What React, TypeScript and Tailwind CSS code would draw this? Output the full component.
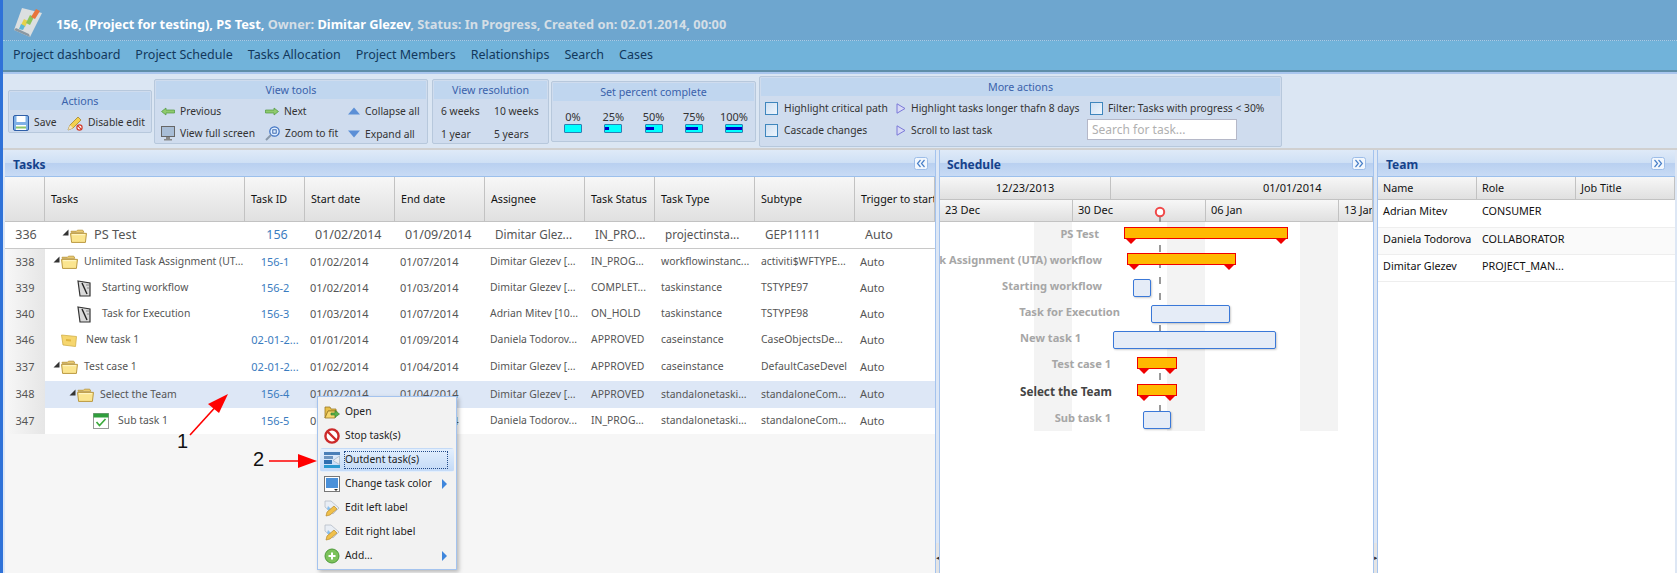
import type { ReactNode } from "react";

function Folder() {
  return (
    <svg width="17" height="15" viewBox="0 0 16 14" className="shrink-0">
      <path d="M1 3h5l1 -1h5l1 2H1z" fill="#f5d67a" stroke="#b8943a" strokeWidth="0.8" />
      <path d="M0.5 5h15l-1 8.5H1.5z" fill="#fbe58f" stroke="#b8943a" strokeWidth="0.9" />
      <path d="M2 6.2h12" stroke="#fff6c8" strokeWidth="1" />
    </svg>
  );
}

function NoteIcon() {
  return (
    <svg width="15" height="17" viewBox="0 0 15 17" className="shrink-0">
      <path d="M1 1l12 2v13H3z" fill="#d9d9d9" stroke="#333" strokeWidth="1.2" />
      <path d="M5 3l5 11" stroke="#222" strokeWidth="1.4" />
      <path d="M9 5h3M10 8h2" stroke="#888" strokeWidth="1" />
    </svg>
  );
}

function CaseIcon() {
  return (
    <svg width="16" height="14" viewBox="0 0 16 14" className="shrink-0">
      <path d="M0.5 2l15 1.5 -1 10 -12.5 -1.5z" fill="#f6d66e" stroke="#d2b04a" strokeWidth="0.8" />
      <path d="M5 6l5 .5v2l-5 -.5z" fill="#e0b640" />
    </svg>
  );
}

function CalendarCheck() {
  return (
    <svg width="16" height="16" viewBox="0 0 16 16" className="shrink-0">
      <rect x="0.5" y="0.5" width="15" height="15" fill="#fff" stroke="#999" />
      <rect x="0.5" y="0.5" width="15" height="4" fill="#2f9e3c" />
      <path d="M3.5 9l3 3.5L12.5 6" fill="none" stroke="#3caa3c" strokeWidth="1.7" />
    </svg>
  );
}

function Triangle({ cls }: { cls: string }) {
  return (
    <svg width="7" height="7" viewBox="0 0 7 7" className={cls}>
      <path d="M6.5 0.5v6H0.5z" fill="#333" />
    </svg>
  );
}

function Logo() {
  return (
    <svg width="30" height="30" viewBox="0 0 30 30" className="shrink-0 mt-[4px]">
      <path d="M9 1l20 5 -12 24L1 23z" fill="#dcdfe0" />
      <path d="M1 23l16 7 -1 -3L3 21z" fill="#8b98a2" />
      <path d="M8 18l4 2 3 -6 -4 -2z" fill="#e6d24a" />
      <path d="M6 22l4 1 2 -4 -4 -2z" fill="#5cb7d8" />
      <path d="M13 16l4 2 4 -8 -4 -2z" fill="#8cc45a" />
      <path d="M18 10l4 2 5 -8 -4 -2z" fill="#e8743a" />
    </svg>
  );
}

function SaveIcon() {
  return (
    <svg width="16" height="16" viewBox="0 0 16 16" className="shrink-0">
      <rect x="0.5" y="0.5" width="15" height="15" rx="1.5" fill="#7fb0e6" stroke="#2f5fa8" />
      <rect x="3.5" y="1" width="9" height="6" fill="#fff" />
      <rect x="3" y="10" width="10" height="5" fill="#fff" />
      <rect x="3" y="11.5" width="10" height="2" fill="#8cc46a" />
    </svg>
  );
}

function PencilNo() {
  return (
    <svg width="16" height="16" viewBox="0 0 16 16" className="shrink-0">
      <path d="M1 15l2 -5 8 -8 3 3 -8 8z" fill="#f3d04e" stroke="#a6842a" strokeWidth="0.8" />
      <path d="M1 15l2 -5 3 3z" fill="#f5e3c0" />
      <circle cx="12.5" cy="12.5" r="2.6" fill="#fff" stroke="#d23a2a" strokeWidth="1.2" />
      <path d="M10.8 10.8l3.4 3.4" stroke="#d23a2a" strokeWidth="1.2" />
    </svg>
  );
}

function ArrowLeft() {
  return (
    <svg width="14" height="9" viewBox="0 0 14 9" className="shrink-0">
      <path d="M0.5 4.5L5 1v2h8.5v3H5v2z" fill="#8fca6e" stroke="#4d9a3c" strokeWidth="0.7" />
    </svg>
  );
}

function ArrowRight() {
  return (
    <svg width="14" height="9" viewBox="0 0 14 9" className="shrink-0">
      <path d="M13.5 4.5L9 1v2H0.5v3H9v2z" fill="#8fca6e" stroke="#4d9a3c" strokeWidth="0.7" />
    </svg>
  );
}

function Monitor() {
  return (
    <svg width="14" height="15" viewBox="0 0 14 15" className="shrink-0">
      <rect x="0.5" y="0.5" width="13" height="10" fill="#a8bdd6" stroke="#666" />
      <path d="M5 11h4v2H5zM3 13h8v1.5H3z" fill="#888" />
    </svg>
  );
}

function ZoomFit() {
  return (
    <svg width="15" height="15" viewBox="0 0 15 15" className="shrink-0">
      <circle cx="9.5" cy="5.5" r="4.7" fill="#dfeeff" stroke="#3b6fc0" strokeWidth="1.2" />
      <path d="M6 9L1 14" stroke="#8a99aa" strokeWidth="2" />
      <rect x="7.8" y="3.8" width="3.4" height="3.4" fill="none" stroke="#2f5fa8" strokeWidth="0.9" />
    </svg>
  );
}

function CaretUp() {
  return (
    <svg width="12" height="8" viewBox="0 0 12 8" className="shrink-0">
      <path d="M6 0.5L12 7.5H0z" fill="#5b8fd6" />
    </svg>
  );
}

function CaretDown() {
  return (
    <svg width="12" height="8" viewBox="0 0 12 8" className="shrink-0">
      <path d="M6 7.5L12 0.5H0z" fill="#5b8fd6" />
    </svg>
  );
}

function PlayIcon() {
  return (
    <svg width="10" height="11" viewBox="0 0 10 11" className="shrink-0">
      <path d="M1 0.8l8 4.7 -8 4.7z" fill="#d7d9f5" stroke="#7a78d8" />
    </svg>
  );
}

function CheckBox() {
  return <span className="w-[13px] h-[13px] shrink-0 border border-[#3f86bd] bg-gradient-to-br from-[#cfe0f3] to-[#eef5fc]" />;
}

function Collapser({ dir }: { dir: "left" | "right" }) {
  return (
    <svg width="14" height="13" viewBox="0 0 14 13" className="shrink-0">
      <rect x="0.5" y="0.5" width="13" height="12" rx="2" fill="#f2f7fd" stroke="#9dbde8" />
      <path d={dir === "left" ? "M6.5 3L3.5 6.5l3 3.5M10.5 3L7.5 6.5l3 3.5" : "M3.5 3l3 3.5-3 3.5M7.5 3l3 3.5-3 3.5"} fill="none" stroke="#4a80c8" strokeWidth="1.2" />
    </svg>
  );
}

function Group({ title, className, children }: { title: string; className: string; children: ReactNode }) {
  return (
    <div className={`border border-[#b7c8dc] rounded-[2px] bg-[#cfdcee] p-px ${className}`}>
      <div className="h-[18px] bg-[#c0d6ef] text-[#3a62ab] text-[10.7px] text-center leading-[18px]">{title}</div>
      {children}
    </div>
  );
}

function Tool({ icon, label, className }: { icon: ReactNode; label: string; className: string }) {
  return (
    <div className={`absolute flex items-center gap-[5px] whitespace-nowrap ${className}`}>
      {icon}
      <span>{label}</span>
    </div>
  );
}

function PanelHeader({ title, pad, dir }: { title: string; pad: string; dir: "left" | "right" }) {
  return (
    <div className={`h-[27px] shrink-0 flex items-center justify-between border-b border-[#9cc0ec] bg-[linear-gradient(#dfeaf8_0%,#cfe0f5_48%,#b9d0f0_52%,#c8dbf5_100%)] ${pad}`}>
      <span className="pt-[3px] font-bold text-[#15428b] text-[12px]">{title}</span>
      <Collapser dir={dir} />
    </div>
  );
}

const headBg = "bg-gradient-to-b from-[#f7f7f7] to-[#e0e0e0] border-r border-b border-[#c2c2c2] text-[#111]";

const columns = [
  { label: "", cls: "w-[40px]" },
  { label: "Tasks", cls: "w-[200px]" },
  { label: "Task ID", cls: "w-[60px]" },
  { label: "Start date", cls: "w-[90px]" },
  { label: "End date", cls: "w-[90px]" },
  { label: "Assignee", cls: "w-[100px]" },
  { label: "Task Status", cls: "w-[70px]" },
  { label: "Task Type", cls: "w-[100px]" },
  { label: "Subtype", cls: "w-[100px]" },
  { label: "Trigger to start", cls: "w-[80px]" },
];

const rows = [
  {
    num: "338", h: "h-[26px]", bg: "bg-white", tree: "pl-[8px]", gap: "gap-[6px]", tri: true, icon: <Folder />, name: "Unlimited Task Assignment (UT...",
    id: "156-1", start: "01/02/2014", end: "01/07/2014", who: "Dimitar Glezev [...", status: "IN_PROG...", type: "workflowinstanc...", sub: "activiti$WFTYPE...",
  },
  {
    num: "339", h: "h-[26px]", bg: "bg-white", tree: "pl-[32px]", gap: "gap-[10px]", tri: false, icon: <NoteIcon />, name: "Starting workflow",
    id: "156-2", start: "01/02/2014", end: "01/03/2014", who: "Dimitar Glezev [...", status: "COMPLET...", type: "taskinstance", sub: "TSTYPE97",
  },
  {
    num: "340", h: "h-[26px]", bg: "bg-white", tree: "pl-[32px]", gap: "gap-[10px]", tri: false, icon: <NoteIcon />, name: "Task for Execution",
    id: "156-3", start: "01/03/2014", end: "01/07/2014", who: "Adrian Mitev [10...", status: "ON_HOLD", type: "taskinstance", sub: "TSTYPE98",
  },
  {
    num: "346", h: "h-[26px]", bg: "bg-white", tree: "pl-[16px]", gap: "gap-[9px]", tri: false, icon: <CaseIcon />, name: "New task 1",
    id: "02-01-2...", start: "01/01/2014", end: "01/09/2014", who: "Daniela Todorov...", status: "APPROVED", type: "caseinstance", sub: "CaseObjectsDe...",
  },
  {
    num: "337", h: "h-[28px]", bg: "bg-white", tree: "pl-[8px]", gap: "gap-[6px]", tri: true, icon: <Folder />, name: "Test case 1",
    id: "02-01-2...", start: "01/02/2014", end: "01/04/2014", who: "Dimitar Glezev [...", status: "APPROVED", type: "caseinstance", sub: "DefaultCaseDevel",
  },
  {
    num: "348", h: "h-[27px]", bg: "bg-[#dde7f6]", tree: "pl-[24px]", gap: "gap-[6px]", tri: true, icon: <Folder />, name: "Select the Team",
    id: "156-4", start: "01/02/2014", end: "01/04/2014", who: "Dimitar Glezev [...", status: "APPROVED", type: "standalonetaski...", sub: "standaloneCom...",
  },
  {
    num: "347", h: "h-[26px]", bg: "bg-white", tree: "pl-[48px]", gap: "gap-[9px]", tri: false, icon: <CalendarCheck />, name: "Sub task 1",
    id: "156-5", start: "01/02/2014", end: "01/04/2014", who: "Daniela Todorov...", status: "IN_PROG...", type: "standalonetaski...", sub: "standaloneCom...",
  },
];

function TaskRow({ r }: { r: (typeof rows)[number] }) {
  return (
    <div className={`flex items-center text-[#555] text-[10.4px] ${r.h}`}>
      <div className="w-[40px] h-full flex items-center justify-center text-[11px] bg-gradient-to-r from-[#f7f7f7] to-[#e6e6e6]">{r.num}</div>
      <div className={`w-[200px] h-full flex items-center ${r.bg} ${r.tree}`}>
        {r.tri && <Triangle cls="shrink-0 mb-[5px] mr-px" />}
        <div className={`flex items-center ${r.gap}`}>
          {r.icon}
          <span className="whitespace-nowrap">{r.name}</span>
        </div>
      </div>
      <div className={`flex flex-1 h-full items-center ${r.bg}`}>
        <div className="w-[60px] text-center text-[11px] text-[#3a7cc0] whitespace-nowrap">{r.id}</div>
        <div className="w-[90px] pl-[5px] text-[11px]">{r.start}</div>
        <div className="w-[90px] pl-[5px] text-[11px]">{r.end}</div>
        <div className="w-[100px] pl-[5px] whitespace-nowrap">{r.who}</div>
        <div className="w-[70px] pl-[6px] whitespace-nowrap">{r.status}</div>
        <div className="w-[100px] pl-[6px] whitespace-nowrap">{r.type}</div>
        <div className="w-[100px] pl-[6px] whitespace-nowrap">{r.sub}</div>
        <div className="w-[80px] pl-[5px] text-[11px]">Auto</div>
      </div>
    </div>
  );
}

function TasksPanel() {
  return (
    <div className="w-[930px] shrink-0 flex flex-col overflow-hidden bg-[#f6f6f6]">
      <PanelHeader title="Tasks" pad="pl-[8px] pr-[7px]" dir="left" />
      <div className="flex h-[45px] shrink-0 text-[10.7px]">
        {columns.map((c) => (
          <div key={c.label} className={`shrink-0 flex items-center pl-[6px] whitespace-nowrap overflow-hidden ${c.cls} ${headBg}`}>{c.label}</div>
        ))}
      </div>
      <div className="flex h-[27px] shrink-0 items-center text-[11.7px] text-[#555] bg-white border-b border-[#c8c8c8]">
        <div className="w-[40px] pl-[2px] text-center text-[12.5px]">336</div>
        <div className="w-[200px] flex items-center pl-[17px]">
          <Triangle cls="shrink-0 mb-[5px] mr-px" />
          <div className="flex items-center gap-[7px]">
            <Folder />
            <span className="text-[12.8px]">PS Test</span>
          </div>
        </div>
        <div className="w-[60px] pl-[4px] text-center text-[12.5px] text-[#3a7cc0]">156</div>
        <div className="w-[90px] pl-[10px] text-[12.5px]">01/02/2014</div>
        <div className="w-[90px] pl-[10px] text-[12.5px]">01/09/2014</div>
        <div className="w-[100px] pl-[10px] whitespace-nowrap">Dimitar Glez...</div>
        <div className="w-[70px] pl-[10px] whitespace-nowrap">IN_PRO...</div>
        <div className="w-[100px] pl-[10px] whitespace-nowrap">projectinsta...</div>
        <div className="w-[100px] pl-[10px]">GEP11111</div>
        <div className="w-[80px] pl-[10px] text-[12.5px]">Auto</div>
      </div>
      {rows.map((r) => (
        <TaskRow key={r.num} r={r} />
      ))}
    </div>
  );
}

const ganttLabels = [
  { text: "PS Test", cls: "left-[159px] top-[3px] text-[11.1px] text-[#a6a6a6]" },
  { text: "Unlimited Task Assignment (UTA) workflow", cls: "left-[162px] top-[29px] text-[11.1px] text-[#a6a6a6]" },
  { text: "Starting workflow", cls: "left-[162px] top-[55px] text-[11.1px] text-[#a6a6a6]" },
  { text: "Task for Execution", cls: "left-[180px] top-[81px] text-[11.1px] text-[#a6a6a6]" },
  { text: "New task 1", cls: "left-[141px] top-[107px] text-[11.1px] text-[#a6a6a6]" },
  { text: "Test case 1", cls: "left-[171px] top-[133px] text-[11.1px] text-[#a6a6a6]" },
  { text: "Select the Team", cls: "left-[172px] top-[160px] text-[11.7px] text-[#444]" },
  { text: "Sub task 1", cls: "left-[171px] top-[187px] text-[11.1px] text-[#a6a6a6]" },
];

const summaryBars = [
  { cls: "left-[184px] top-[5px] w-[164px]" },
  { cls: "left-[187px] top-[31px] w-[109px]" },
  { cls: "left-[197px] top-[135px] w-[40px]" },
  { cls: "left-[197px] top-[162px] w-[40px]" },
];

const taskBars = [
  { cls: "left-[193px] top-[57px] w-[18px]" },
  { cls: "left-[211px] top-[83px] w-[79px]" },
  { cls: "left-[173px] top-[109px] w-[163px]" },
  { cls: "left-[203px] top-[189px] w-[28px]" },
];

function SchedulePanel() {
  return (
    <div className="w-[433px] shrink-0 flex flex-col overflow-hidden bg-white">
      <PanelHeader title="Schedule" pad="pl-[7px] pr-[7px]" dir="right" />
      <div className="flex h-[23px] shrink-0">
        <div className={`w-[171px] shrink-0 flex items-center justify-center text-[#111] ${headBg}`}>12/23/2013</div>
        <div className={`flex-1 flex items-center pl-[152px] text-[#111] ${headBg}`}>01/01/2014</div>
      </div>
      <div className="relative flex h-[22px] shrink-0">
        <div className={`w-[133px] shrink-0 flex items-center pl-[5px] text-[#111] ${headBg}`}>23 Dec</div>
        <div className={`w-[133px] shrink-0 flex items-center pl-[5px] text-[#111] ${headBg}`}>30 Dec</div>
        <div className={`w-[133px] shrink-0 flex items-center pl-[5px] text-[#111] ${headBg}`}>06 Jan</div>
        <div className={`flex-1 flex items-center pl-[5px] whitespace-nowrap overflow-hidden text-[#111] ${headBg}`}>13 Jan</div>
        <svg width="12" height="16" viewBox="0 0 12 16" className="absolute left-[214px] top-[6px]">
          <path d="M6 10v6" stroke="#999" strokeWidth="2" />
          <circle cx="6" cy="6" r="4.2" fill="#fff" stroke="#f04848" strokeWidth="2" />
        </svg>
      </div>
      <div className="relative flex-1 overflow-hidden">
        <div className="absolute left-[94px] top-0 w-[38px] h-[209px] bg-[#f3f3f3]" />
        <div className="absolute left-[227px] top-0 w-[38px] h-[209px] bg-[#f3f3f3]" />
        <div className="absolute left-[360px] top-0 w-[38px] h-[209px] bg-[#f3f3f3]" />
        <svg width="2" height="212" viewBox="0 0 2 212" className="absolute left-[219px] top-0">
          <path d="M1 7V212" stroke="#999" strokeWidth="2" strokeDasharray="7 9" strokeDashoffset="-16" />
        </svg>
        {ganttLabels.map((l) => (
          <div key={l.text} className={`absolute -translate-x-full h-[18px] leading-[18px] font-bold whitespace-nowrap ${l.cls}`}>{l.text}</div>
        ))}
        {summaryBars.map((b) => (
          <div key={b.cls} className={`absolute h-[12px] bg-[#ffb900] border border-[#f00000] ${b.cls}`}>
            <span className="absolute left-[1px] top-[11px] w-0 h-0 border-x-[5px] border-t-[5px] border-x-transparent border-t-[#f00000]" />
            <span className="absolute right-[1px] top-[11px] w-0 h-0 border-x-[5px] border-t-[5px] border-x-transparent border-t-[#f00000]" />
          </div>
        ))}
        {taskBars.map((b) => (
          <div key={b.cls} className={`absolute h-[18px] rounded-[2px] bg-[#e5ecf7] border border-[#3a78d8] shadow-[1px_1px_2px_rgba(0,0,0,0.2)] ${b.cls}`} />
        ))}
      </div>
    </div>
  );
}

const team = [
  { name: "Adrian Mitev", role: "CONSUMER", cls: "h-[28px] bg-white" },
  { name: "Daniela Todorova", role: "COLLABORATOR", cls: "h-[27px] bg-[#fafafa]" },
  { name: "Dimitar Glezev", role: "PROJECT_MAN...", cls: "h-[27px] bg-white" },
];

function TeamPanel() {
  return (
    <div className="w-[297px] shrink-0 flex flex-col overflow-hidden bg-white text-[10.8px]">
      <PanelHeader title="Team" pad="pl-[8px] pr-[10px]" dir="right" />
      <div className="flex h-[23px] shrink-0">
        <div className={`w-[99px] shrink-0 flex items-center pl-[5px] ${headBg}`}>Name</div>
        <div className={`w-[99px] shrink-0 flex items-center pl-[5px] ${headBg}`}>Role</div>
        <div className={`w-[99px] shrink-0 flex items-center pl-[5px] ${headBg}`}>Job Title</div>
      </div>
      {team.map((t) => (
        <div key={t.name} className={`flex items-center text-[#111] border-b border-[#eeeeee] ${t.cls}`}>
          <div className="w-[99px] pl-[5px] pb-[4px] whitespace-nowrap">{t.name}</div>
          <div className="w-[99px] pl-[5px] pb-[4px] whitespace-nowrap">{t.role}</div>
        </div>
      ))}
    </div>
  );
}

function Splitter({ handle }: { handle: string }) {
  return (
    <div className="relative w-[5px] shrink-0 bg-[#dde7f5] border-x border-[#a4c3ee]">
      <div className="absolute left-0 bottom-0 w-[3px] h-[30px] bg-[#e4e4e4] text-[#333] text-[7px] leading-[30px] text-center overflow-hidden">{handle}</div>
    </div>
  );
}

function LabelIcon() {
  return (
    <svg width="16" height="17" viewBox="0 0 16 17">
      <path d="M1 1h6l8 7 -6 6 -8 -7z" fill="#e9eef5" stroke="#b5bcc6" strokeWidth="0.8" />
      <path d="M4 6l4 4 -2 2 -3 -3z" fill="#8ac0ee" />
      <path d="M2 16l1 -4 7 -6 3 3 -7 6z" fill="#f0c04a" stroke="#b88a2c" strokeWidth="0.7" />
    </svg>
  );
}

const menuItems = [
  { label: "Open", cls: "", more: false, icon: (
    <svg width="16" height="15" viewBox="0 0 16 15">
      <path d="M1 13V2h5l1 2h5v2H4z" fill="#e8c04a" stroke="#9a7a24" strokeWidth="0.8" />
      <path d="M1 13l3 -7h9l-2 7z" fill="#f6d66e" stroke="#9a7a24" strokeWidth="0.8" />
      <path d="M7 8h4V5.5L15.5 9 11 12.5V10H7z" fill="#5bb04a" stroke="#2f7a2a" strokeWidth="0.6" />
    </svg>
  ) },
  { label: "Stop task(s)", cls: "", more: false, icon: (
    <svg width="16" height="16" viewBox="0 0 16 16"><circle cx="8" cy="8" r="6.6" fill="#fff" stroke="#cc2a2a" strokeWidth="2.4" /><path d="M3.5 3.5l9 9" stroke="#cc2a2a" strokeWidth="2.4" /></svg>
  ) },
  { label: "Outdent task(s)", cls: "bg-gradient-to-b from-[#e3effd] to-[#c3daf7] border-[#a4c3ee] rounded-[3px]", more: false, icon: (
    <svg width="16" height="16" viewBox="0 0 16 16"><rect width="16" height="3" fill="#4a7fb8" /><rect y="4" width="9" height="3" fill="#6c94c0" /><rect y="8" width="8" height="4" fill="#2f6fb0" /><rect y="13" width="16" height="3" fill="#2a9ad0" /><path d="M15.5 4L9 8.5l6.5 4z" fill="#e8edf3" stroke="#9ab" strokeWidth="0.6" /></svg>
  ) },
  { label: "Change task color", cls: "", more: true, icon: (
    <svg width="16" height="16" viewBox="0 0 16 16"><rect x="0.5" y="0.5" width="15" height="15" fill="#fff" stroke="#777" /><rect x="2" y="2" width="12" height="10" fill="#4a90d9" /><path d="M10 13h4l-2 2z" fill="#333" /></svg>
  ) },
  { label: "Edit left label", cls: "", more: false, icon: <LabelIcon /> },
  { label: "Edit right label", cls: "", more: false, icon: <LabelIcon /> },
  { label: "Add...", cls: "", more: true, icon: (
    <svg width="16" height="16" viewBox="0 0 16 16"><circle cx="8" cy="8" r="7" fill="#7cc25a" stroke="#4e9a3a" /><path d="M8 4.5v7M4.5 8h7" stroke="#fff" strokeWidth="2" /></svg>
  ) },
];

function ContextMenu() {
  return (
    <div className="absolute left-[317px] top-[396px] w-[140px] h-[174px] px-[2px] py-[3px] bg-[#f2f2f2] border border-[#a4c3ee] shadow-[2px_2px_4px_rgba(0,0,0,0.25)] text-[#222] text-[10.3px]">
      {menuItems.map((m) => (
        <div key={m.label} className={`h-[24px] flex items-center pl-[3px] pr-[6px] border border-transparent ${m.cls}`}>
          <span className="w-[16px] h-[16px] shrink-0 flex items-center justify-center">{m.icon}</span>
          <span className={`ml-[5px] flex-1 whitespace-nowrap ${m.label === "Outdent task(s)" ? "outline-dotted outline-1 outline-[#224a88]" : ""}`}>{m.label}</span>
          {m.more && <span className="w-0 h-0 border-y-[5px] border-l-[5px] border-y-transparent border-l-[#3f86dc]" />}
        </div>
      ))}
    </div>
  );
}

function Annotations() {
  return (
    <>
      <svg className="absolute left-0 top-0 pointer-events-none" width="1677" height="573" viewBox="0 0 1677 573">
        <path d="M190 435L220 402" stroke="#f00" strokeWidth="1.6" />
        <path d="M228 394L208 404L219 413z" fill="#f00" />
        <path d="M269 461H303" stroke="#f00" strokeWidth="1.6" />
        <path d="M317 461L298 454V468z" fill="#f00" />
      </svg>
      <div className="absolute left-[177px] top-[429px] text-[20px] leading-[24px] text-[#111] font-['Liberation_Sans',sans-serif]">1</div>
      <div className="absolute left-[253px] top-[447px] text-[20px] leading-[24px] text-[#111] font-['Liberation_Sans',sans-serif]">2</div>
    </>
  );
}

export default function App() {
  return (
    <div className="relative w-[1677px] h-[573px] overflow-hidden bg-[#2f72d8] pl-[3px] text-[11px] text-[#333] font-['Noto_Sans',sans-serif]">
      <div className="h-full flex flex-col bg-[#dde7f5]">
        <div className="h-[41px] shrink-0 flex items-center pl-[10px] gap-[13px] bg-[#6ea6cf] border-b border-dotted border-[#a8cde6]">
          <Logo />
          <div className="pt-[9px] text-[12.8px] font-bold text-white whitespace-nowrap">
            156, (Project for testing), PS Test, <span className="text-[#d4dee6]">Owner:</span> Dimitar Glezev<span className="text-[#d4dee6]">, Status: In Progress, Created on: 02.01.2014, 00:00</span>
          </div>
        </div>
        <div className="h-[31px] shrink-0 flex items-center gap-[15px] pl-[10px] bg-[#71b3da] border-b-2 border-[#5f8ea8] text-[12.5px] text-[#12385c]">
          {["Project dashboard", "Project Schedule", "Tasks Allocation", "Project Members", "Relationships", "Search", "Cases"].map((n) => (
            <span key={n} className="whitespace-nowrap">{n}</span>
          ))}
        </div>
        <div className="h-[78px] shrink-0 flex items-center pl-[5px] border-t-2 border-[#a9c6ee] border-b-2 border-b-[#d0d0d0] bg-[#dbe6f3] text-[10.3px]">
          <Group title="Actions" className="relative w-[144px] h-[43px] mr-[2px]">
            <Tool icon={<SaveIcon />} label="Save" className="left-[4px] top-[24px] gap-[4px]" />
            <Tool icon={<PencilNo />} label="Disable edit" className="left-[58px] top-[24px] gap-[4px]" />
          </Group>
          <Group title="View tools" className="relative w-[274px] h-[65px] mr-[4px]">
            <Tool icon={<ArrowLeft />} label="Previous" className="left-[6px] top-[24px]" />
            <Tool icon={<Monitor />} label="View full screen" className="left-[6px] top-[46px]" />
            <Tool icon={<ArrowRight />} label="Next" className="left-[110px] top-[24px]" />
            <Tool icon={<ZoomFit />} label="Zoom to fit" className="left-[110px] top-[46px]" />
            <Tool icon={<CaretUp />} label="Collapse all" className="left-[193px] top-[24px]" />
            <Tool icon={<CaretDown />} label="Expand all" className="left-[193px] top-[47px]" />
          </Group>
          <Group title="View resolution" className="relative w-[117px] h-[65px] mr-[2px]">
            <div className="grid grid-cols-2 gap-y-[8px] pl-[7px] pt-[5px]">
              <span>6 weeks</span>
              <span>10 weeks</span>
              <span>1 year</span>
              <span>5 years</span>
            </div>
          </Group>
          <Group title="Set percent complete" className="w-[205px] h-[61px] mr-[3px]">
            <div className="flex justify-between px-[10px] pt-[9px] text-[11px]">
              {[
                { p: "0%", fill: "w-0" },
                { p: "25%", fill: "w-[25%]" },
                { p: "50%", fill: "w-[50%]" },
                { p: "75%", fill: "w-[75%]" },
                { p: "100%", fill: "w-full" },
              ].map((x) => (
                <div key={x.p} className="w-[20px] flex flex-col items-center text-center">
                  <span className="leading-[14px] whitespace-nowrap">{x.p}</span>
                  <span className="w-[18px] h-[9px] border border-[#2a7fb5] rounded-[1px] bg-[#00ffff] flex items-center">
                    <span className={`h-[3px] bg-[#0000c8] ${x.fill}`} />
                  </span>
                </div>
              ))}
            </div>
          </Group>
          <Group title="More actions" className="relative w-[523px] h-[71px]">
            <Tool icon={<CheckBox />} label="Highlight critical path" className="left-[5px] top-[24px] gap-[6px]" />
            <Tool icon={<CheckBox />} label="Cascade changes" className="left-[5px] top-[46px] gap-[6px]" />
            <Tool icon={<PlayIcon />} label="Highlight tasks longer thafn 8 days" className="left-[136px] top-[24px]" />
            <Tool icon={<PlayIcon />} label="Scroll to last task" className="left-[136px] top-[46px]" />
            <Tool icon={<CheckBox />} label="Filter: Tasks with progress < 30%" className="left-[330px] top-[24px] gap-[5px]" />
            <input readOnly placeholder="Search for task..." className="absolute left-[327px] top-[42px] w-[150px] h-[21px] px-[4px] bg-white border border-[#b5b8c8] outline-none placeholder:text-[#b0b0b0] text-[12px]" />
          </Group>
        </div>
        <div className="flex-1 flex min-h-0 pl-[2px]">
          <TasksPanel />
          <Splitter handle="◂" />
          <SchedulePanel />
          <Splitter handle="▸" />
          <TeamPanel />
        </div>
      </div>
      <ContextMenu />
      <Annotations />
    </div>
  );
}
